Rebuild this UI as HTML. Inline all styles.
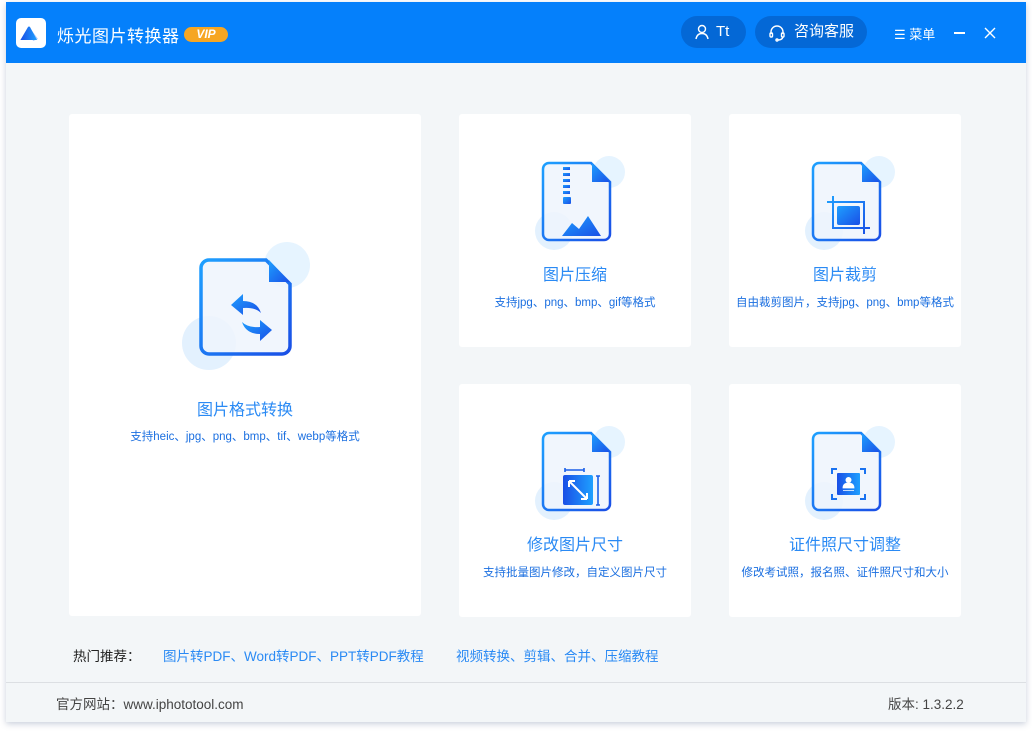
<!DOCTYPE html>
<html><head><meta charset="utf-8"><style>
*{margin:0;padding:0;box-sizing:border-box}
body{width:1032px;height:733px;background:#fff;position:relative;overflow:hidden;font-family:"Liberation Sans","Noto Sans CJK SC",sans-serif}
.win{position:absolute;left:6px;top:2px;width:1020px;height:720px;background:#f3f6f8;box-shadow:0 2px 6px rgba(80,100,140,.3)}
.hdr{position:absolute;left:0;top:0;width:1020px;height:61px;background:#0580fb}
.logo{position:absolute;left:10px;top:16px;width:30px;height:30px;background:#fff;border-radius:5px}
.title{position:absolute;left:51px;top:20px;color:#fff;font-size:17px;letter-spacing:.5px}
.vip{position:absolute;left:178px;top:25px;width:44px;height:15px;border-radius:8px;background:#f6a623;color:#fff;font-size:12px;font-weight:bold;font-style:italic;text-align:center;line-height:15px}
.pill{position:absolute;top:14px;height:32px;border-radius:16px;background:#0468d6;color:#fff;font-size:15px;line-height:32px}
.card{position:absolute;background:#fff;border-radius:3px;text-align:center}
.ct{position:absolute;left:0;width:100%;color:#2a8af4;font-size:16px}
.cs{position:absolute;left:0;width:100%;color:#1b6fe0;font-size:11.5px;white-space:nowrap}
.ic{position:absolute;overflow:visible}
.foot{position:absolute;left:0;top:680px;width:1020px;border-top:1px solid #dcdfe3}
</style></head><body>
<svg width="0" height="0" style="position:absolute"><defs>
<linearGradient id="g" x1="0" y1="0" x2="1" y2="1"><stop offset="0" stop-color="#1ea0ff"/><stop offset="1" stop-color="#1a4fe6"/></linearGradient>
<linearGradient id="g2" x1="0" y1="0" x2="1" y2="0"><stop offset="0" stop-color="#1a4fe6"/><stop offset="1" stop-color="#1ea0ff"/></linearGradient>
</defs></svg>
<div class="win">
<div class="hdr">
<div class="logo"><svg width="30" height="30" viewBox="0 0 30 30"><path d="M14 10 L22 21 L17 23 Z" fill="#a9c9ff"/><path d="M12 9 Q13 8 14 9 L21 22 L5 22 Q4 22 5 21 Z" fill="url(#g2)"/></svg></div>
<div class="title">烁光图片转换器</div>
<div class="vip">VIP</div>
<div class="pill" style="left:675px;width:65px"><svg style="position:absolute;left:13px;top:8px" width="16" height="16" viewBox="0 0 16 16" fill="none" stroke="#fff" stroke-width="1.4"><circle cx="8" cy="5" r="3.5"/><path d="M2 15 Q3 9.5 8 9.5 Q13 9.5 14 15"/></svg><span style="position:absolute;left:35px">Tt</span></div>
<div class="pill" style="left:749px;width:112px"><svg style="position:absolute;left:13px;top:8px" width="18" height="18" viewBox="0 0 18 18" fill="none" stroke="#fff" stroke-width="1.4"><path d="M3 10 V8 a6 6 0 0 1 12 0 V10"/><rect x="2" y="9" width="2.5" height="4" rx="1"/><rect x="13.5" y="9" width="2.5" height="4" rx="1"/><path d="M15 13 Q14 16 10 16"/><circle cx="9" cy="16" r="1"/></svg><span style="position:absolute;left:39px">咨询客服</span></div>
<div style="position:absolute;left:888px;top:22px;color:#fff;font-size:13px">☰ 菜单</div>
<div style="position:absolute;left:948px;top:30px;width:11px;height:1.5px;background:#fff"></div>
<svg style="position:absolute;left:978px;top:25px" width="12" height="12" viewBox="0 0 12 12" stroke="#fff" stroke-width="1.4"><path d="M1 1 L11 11 M11 1 L1 11"/></svg>
</div>

<div class="card" style="left:63px;top:112px;width:352px;height:502px">
<svg class="ic" style="left:112px;top:128px" width="134" height="130" viewBox="0 0 134 130">
<circle cx="106" cy="23" r="23" fill="#e6f4ff"/><circle cx="28" cy="101" r="27" fill="#e3f1fe"/>
<path d="M28 18 h57 l24 24 v62 a8 8 0 0 1 -8 8 h-73 a8 8 0 0 1 -8 -8 v-78 a8 8 0 0 1 8 -8z" fill="#eef4fd" fill-opacity=".85" stroke="url(#g)" stroke-width="3.5"/>
<path d="M88 18 L109 40 L88 40 Z" fill="url(#g)"/>
<path d="M50 63 L62 52 L62 59 Q76 59 80 71 Q74 65 62 66 L62 73 Z" fill="url(#g)"/>
<path d="M91 88 L79 99 L79 92 Q65 92 61 80 Q67 86 79 85 L79 78 Z" fill="url(#g)"/>
</svg>
<div class="ct" style="top:282px">图片格式转换</div>
<div class="cs" style="top:314px">支持heic、jpg、png、bmp、tif、webp等格式</div>
</div>

<div class="card" style="left:453px;top:112px;width:232px;height:233px">
<svg class="ic" style="left:68px;top:40px" width="100" height="100" viewBox="0 0 100 100">
<circle cx="82" cy="18" r="16" fill="#e6f4ff"/><circle cx="27" cy="77" r="19" fill="#e3f1fe"/>
<path d="M22 9 h42 l19 19 v52 a6 6 0 0 1 -6 6 h-55 a6 6 0 0 1 -6 -6 v-65 a6 6 0 0 1 6 -6z" fill="#eef4fd" fill-opacity=".85" stroke="url(#g)" stroke-width="2.5"/>
<path d="M65 9 L83 28 L65 28 Z" fill="url(#g)"/>
<g fill="url(#g)"><rect x="36" y="13" width="7" height="3"/><rect x="36" y="19" width="7" height="3"/><rect x="36" y="25" width="7" height="3"/><rect x="36" y="31" width="7" height="3"/><rect x="36" y="37" width="7" height="3"/><rect x="36" y="43" width="8" height="7" rx="1"/>
<path d="M35 82 L45 69 L52 75 L61 62 L74 82 Z"/></g>
</svg>
<div class="ct" style="top:147px">图片压缩</div>
<div class="cs" style="top:180px">支持jpg、png、bmp、gif等格式</div>
</div>

<div class="card" style="left:723px;top:112px;width:232px;height:233px">
<svg class="ic" style="left:68px;top:40px" width="100" height="100" viewBox="0 0 100 100">
<circle cx="82" cy="18" r="16" fill="#e6f4ff"/><circle cx="27" cy="77" r="19" fill="#e3f1fe"/>
<path d="M22 9 h42 l19 19 v52 a6 6 0 0 1 -6 6 h-55 a6 6 0 0 1 -6 -6 v-65 a6 6 0 0 1 6 -6z" fill="#eef4fd" fill-opacity=".85" stroke="url(#g)" stroke-width="2.5"/>
<path d="M65 9 L83 28 L65 28 Z" fill="url(#g)"/>
<path d="M30 48 H67 V80 M36 42 V74 H73" fill="none" stroke="url(#g)" stroke-width="2"/>
<rect x="40" y="52" width="23" height="19" rx="2" fill="url(#g)"/>
</svg>
<div class="ct" style="top:147px">图片裁剪</div>
<div class="cs" style="top:180px">自由裁剪图片，支持jpg、png、bmp等格式</div>
</div>

<div class="card" style="left:453px;top:382px;width:232px;height:233px">
<svg class="ic" style="left:68px;top:40px" width="100" height="100" viewBox="0 0 100 100">
<circle cx="82" cy="18" r="16" fill="#e6f4ff"/><circle cx="27" cy="77" r="19" fill="#e3f1fe"/>
<path d="M22 9 h42 l19 19 v52 a6 6 0 0 1 -6 6 h-55 a6 6 0 0 1 -6 -6 v-65 a6 6 0 0 1 6 -6z" fill="#eef4fd" fill-opacity=".85" stroke="url(#g)" stroke-width="2.5"/>
<path d="M65 9 L83 28 L65 28 Z" fill="url(#g)"/>
<path d="M38 46 H57 M38 44 V48 M57 44 V48 M71 52 V81 M69 52 H73 M69 81 H73" stroke="#1a5fe8" stroke-width="1.6" fill="none"/>
<rect x="36" y="51" width="30" height="30" rx="2" fill="url(#g2)"/>
<path d="M42 57 L60 75 M42 57 h6 M42 57 v6 M60 75 h-6 M60 75 v-6" stroke="#fff" stroke-width="2" fill="none"/>
</svg>
<div class="ct" style="top:147px">修改图片尺寸</div>
<div class="cs" style="top:180px">支持批量图片修改，自定义图片尺寸</div>
</div>

<div class="card" style="left:723px;top:382px;width:232px;height:233px">
<svg class="ic" style="left:68px;top:40px" width="100" height="100" viewBox="0 0 100 100">
<circle cx="82" cy="18" r="16" fill="#e6f4ff"/><circle cx="27" cy="77" r="19" fill="#e3f1fe"/>
<path d="M22 9 h42 l19 19 v52 a6 6 0 0 1 -6 6 h-55 a6 6 0 0 1 -6 -6 v-65 a6 6 0 0 1 6 -6z" fill="#eef4fd" fill-opacity=".85" stroke="url(#g)" stroke-width="2.5"/>
<path d="M65 9 L83 28 L65 28 Z" fill="url(#g)"/>
<path d="M35 50 V45 H40 M63 45 H68 V50 M68 70 V75 H63 M40 75 H35 V70" stroke="#1a72f0" stroke-width="2" fill="none"/>
<rect x="40" y="49" width="23" height="22" rx="1" fill="url(#g2)"/>
<circle cx="51.5" cy="56" r="3" fill="#fff"/><path d="M46 64 Q46 59 51.5 59 Q57 59 57 64Z M46 66.5 H57" fill="#fff" stroke="#fff" stroke-width=".8"/>
</svg>
<div class="ct" style="top:147px">证件照尺寸调整</div>
<div class="cs" style="top:180px">修改考试照，报名照、证件照尺寸和大小</div>
</div>

<div style="position:absolute;left:67px;top:643px;font-size:13.5px;color:#222">热门推荐：</div>
<div style="position:absolute;left:157px;top:643px;font-size:13.5px;color:#2a8af4">图片转PDF、Word转PDF、PPT转PDF教程</div>
<div style="position:absolute;left:450px;top:643px;font-size:13.5px;color:#2a8af4">视频转换、剪辑、合并、压缩教程</div>
<div class="foot"></div>
<div style="position:absolute;left:50px;top:691px;font-size:13.5px;color:#444">官方网站：www.iphototool.com</div>
<div style="position:absolute;left:882px;top:691px;font-size:13.5px;color:#444">版本: 1.3.2.2</div>
</div>
</body></html>
